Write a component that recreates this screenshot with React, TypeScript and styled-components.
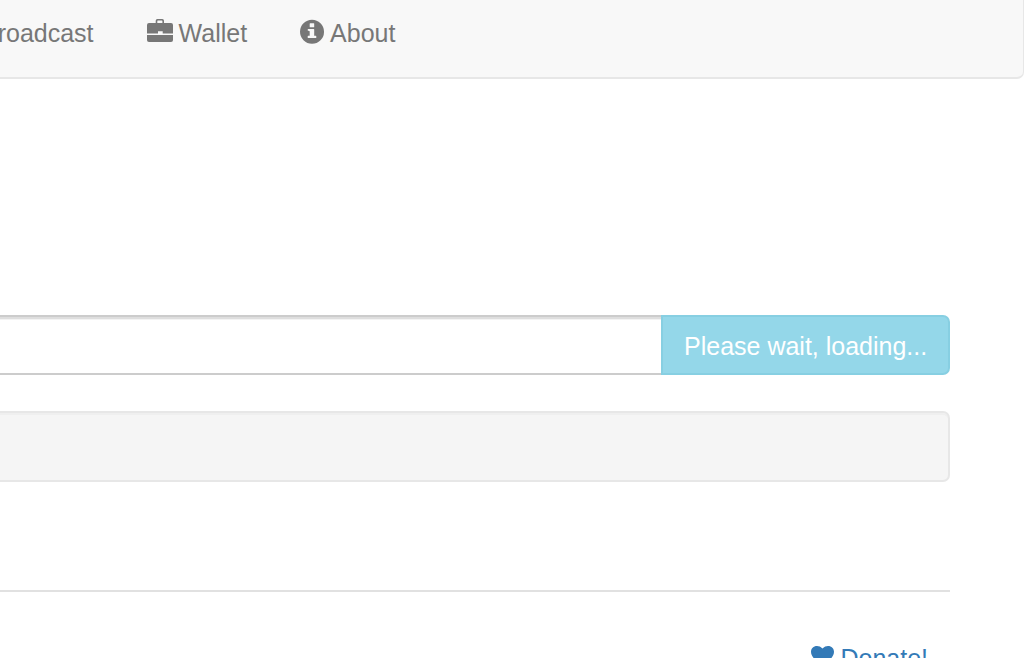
import React from "react";
import styled, { createGlobalStyle } from "styled-components";

const GlobalStyle = createGlobalStyle`
  *, *::before, *::after { box-sizing: border-box; }
  body {
    margin: 0;
    background: #fff;
    color: #333;
    font: 25px/34px "Liberation Sans", Arial, sans-serif;
  }
`;

const Page = styled.div`
  height: 100vh;
  overflow: hidden;
`;

const Navbar = styled.nav`
  height: 79px;
  background: #f8f8f8;
  border: 1px solid #e7e7e7;
  border-width: 0 1px 2px 0;
  border-radius: 0 0 7px 0;
`;

const NavList = styled.ul`
  display: flex;
  gap: 53px;
  list-style: none;
  margin: 0 0 0 -19px;
  padding: 16px 0 0;
`;

const NavLink = styled.a`
  display: flex;
  gap: 6px;
  color: #777;
  text-decoration: none;
  white-space: nowrap;
`;

const Icon = styled.svg`
  flex: none;
  fill: currentColor;
  margin-top: 3px;
`;

const Container = styled.main`
  margin: 236px 74px 0 0;
`;

const InputGroup = styled.form`
  display: flex;
  height: 60px;
`;

const TextInput = styled.input`
  flex: 1;
  min-width: 0;
  padding: 10px 21px;
  border: solid #ccc;
  border-width: 2px 0;
  border-radius: 0;
  background: #fff;
  box-shadow: inset 0 2px 0 #dedede, inset 0 3px 0 #f3f3f3;
  font: inherit;
  color: #555;
  outline: none;
`;

const LoadingButton = styled.button`
  padding: 2px 22px 0 21px;
  width: 289px;
  border: 2px solid #87cfe2;
  border-radius: 0 7px 7px 0;
  background: #94d7e9;
  color: #fff;
  font: inherit;
  white-space: nowrap;
`;

const Well = styled.section`
  height: 71px;
  margin-top: 36px;
  border: 2px solid #e7e7e7;
  border-left: 0;
  border-radius: 0 7px 7px 0;
  background: #f5f5f5;
  box-shadow: inset 0 2px 0 #efefef;
`;

const Footer = styled.footer`
  display: flex;
  justify-content: flex-end;
  margin-top: 108px;
  padding: 49px 22px 0 0;
  border-top: 2px solid #e1e1e1;
`;

const DonateLink = styled(NavLink)`
  color: #337ab7;
`;

const BriefcaseIcon = () => (
  <Icon width="26" height="24" viewBox="0 0 26 24" aria-hidden="true">
    <path
      fillRule="evenodd"
      d="M8.7 4V1.7Q8.7 0 10.4 0H15.3Q17 0 17 1.7V4H24Q26 4 26 6V14.5H15.7V12.2H11V14.5H0V6Q0 4 2 4ZM10.3 4H15.4V2.1Q15.4 1.5 14.8 1.5H10.9Q10.3 1.5 10.3 2.1Z"
    />
    <path d="M0 16H26V21Q26 23 24 23H2Q0 23 0 21Z" />
  </Icon>
);

const InfoIcon = () => (
  <Icon width="24" height="26" viewBox="0 0 24 26" aria-hidden="true">
    <path
      fillRule="evenodd"
      d="M12 .8A12 12 0 1 1 12 24.8A12 12 0 0 1 12 .8ZM10.2 4.2Q9.7 4.2 9.7 4.7V7.8Q9.7 8.3 10.2 8.3H13.7Q14.2 8.3 14.2 7.8V4.7Q14.2 4.2 13.7 4.2ZM8.2 10.1Q7.7 10.1 7.7 10.6V11.5L9.7 12.3V16.7H8.2Q7.7 16.7 7.7 17.2V18.6Q7.7 19.1 8.2 19.1H15.8Q16.3 19.1 16.3 18.6V17.2Q16.3 16.7 15.8 16.7H14.2V10.6Q14.2 10.1 13.7 10.1Z"
    />
  </Icon>
);

const HeartIcon = () => (
  <Icon width="23" height="24" viewBox="0 -2 23 24" aria-hidden="true">
    <path d="M11.5 2.6C13.1.8 15.2 0 17 0C20.6 0 23 2.7 23 5.8C23 12.2 15.5 15.5 11.5 21.5C7.5 15.5 0 12.2 0 5.8C0 2.7 2.4 0 6 0C7.8 0 9.9.8 11.5 2.6Z" />
  </Icon>
);

export default function App() {
  return (
    <>
      <GlobalStyle />
      <Page>
        <Navbar>
          <NavList>
            <li><NavLink href="#broadcast">Broadcast</NavLink></li>
            <li><NavLink href="#wallet"><BriefcaseIcon />Wallet</NavLink></li>
            <li><NavLink href="#about"><InfoIcon />About</NavLink></li>
          </NavList>
        </Navbar>
        <Container>
          <InputGroup>
            <TextInput type="text" aria-label="Value" />
            <LoadingButton type="button">Please wait, loading...</LoadingButton>
          </InputGroup>
          <Well />
          <Footer>
            <DonateLink href="#donate"><HeartIcon />Donate!</DonateLink>
          </Footer>
        </Container>
      </Page>
    </>
  );
}
